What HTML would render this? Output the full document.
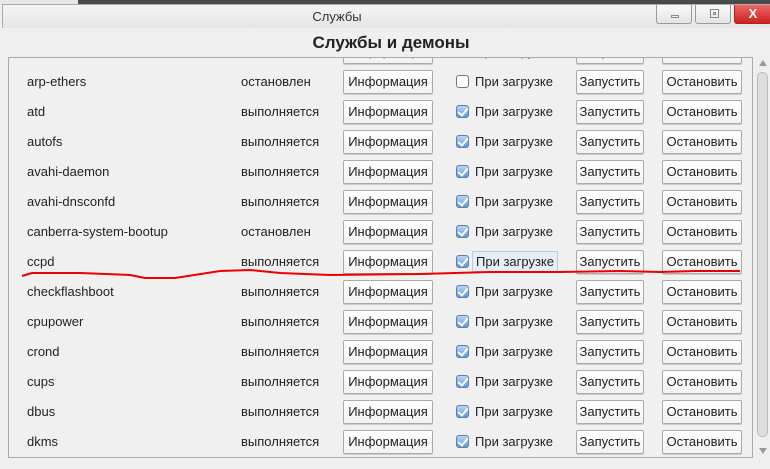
<!DOCTYPE html>
<html><head><meta charset="utf-8"><style>
*{margin:0;padding:0;box-sizing:border-box}
body{width:770px;height:469px;overflow:hidden;background:#efefef;font-family:"Liberation Sans","DejaVu Sans",sans-serif;font-size:13px;color:#222;position:relative}
.top{position:absolute;left:0;top:0;width:770px;height:5px;background:#e8e8e8}
.top .d{position:absolute;left:78px;top:0;right:0;height:4px;background:#4a4a4a}
.tb{position:absolute;left:2px;top:4px;width:768px;height:24px;background:linear-gradient(#f4f4f4,#e6e6e6);border-top:1px solid #aaa;border-left:1px solid #aaa}
.tb .t{position:absolute;left:0;width:668px;text-align:center;top:4px;font-size:13px;color:#333}
.wb{position:absolute;top:0;height:19px;border:1px solid #999;border-top:none;border-radius:0 0 3px 3px;background:linear-gradient(#fafafa,#e4e4e4)}
.h{position:absolute;top:33px;left:0;width:770px;text-align:center;font-weight:bold;font-size:17px;color:#222;padding-left:12px}
.frame{position:absolute;left:8px;top:57px;width:745px;height:401px;border:1px solid #aaa;overflow:hidden;background:#f0f0f0}
.row{position:absolute;left:0;width:745px;height:30px}
.row span{position:absolute;top:7px}
.n{left:18px}.s{left:232px}
.btn{position:absolute;top:3px;height:24px;border:1px solid #aaa;border-radius:2px;background:linear-gradient(#fff,#f2f2f2);text-align:center;line-height:22px;box-shadow:0 1px 0 #ccc}
.b1{left:334px;width:90px}.b2{left:567px;width:68px}.b3{left:653px;width:80px}
.cb{position:absolute;left:447px;top:8px;width:13px;height:13px;border:1px solid #777;border-radius:3px;background:#fff}
.cb.on{background:linear-gradient(#bcd6f2,#5f97d6);border-color:#5a7fb0}
.cb.on:after{content:"";position:absolute;left:3px;top:0px;width:4px;height:8px;border:solid #fff;border-width:0 2px 2px 0;transform:rotate(40deg)}
.lb{left:466px}
.sb{position:absolute;left:755px;top:57px;width:15px;height:401px}
</style></head><body>
<div class="top"><div class="d"></div></div>
<div class="tb"><div class="t">Службы</div>
<div class="wb" style="left:653px;width:36px"><div style="position:absolute;left:14px;top:10px;width:8px;height:3px;border:1px solid #888"></div></div>
<div class="wb" style="left:692px;width:36px"><div style="position:absolute;left:14px;top:4px;width:9px;height:9px;border:1px solid #888"><div style="position:absolute;left:2px;top:2px;width:3px;height:3px;border:1px solid #888"></div></div></div>
<div class="wb" style="left:731px;width:38px;background:linear-gradient(#e66,#c22);border-color:#a22;color:#fff;font-weight:bold;text-align:center;line-height:18px">X</div>
</div>
<div class="h">Службы и демоны</div>
<div class="frame">
<div class="row" style="top:-21px"><div class="btn b1">Информация</div><div class="cb on"></div><span class="lb">При загрузке</span><div class="btn b2">Запустить</div><div class="btn b3">Остановить</div></div>
<div class="row" style="top:9px"><span class="n">arp-ethers</span><span class="s">остановлен</span><div class="btn b1">Информация</div><div class="cb"></div><span class="lb">При загрузке</span><div class="btn b2">Запустить</div><div class="btn b3">Остановить</div></div>
<div class="row" style="top:39px"><span class="n">atd</span><span class="s">выполняется</span><div class="btn b1">Информация</div><div class="cb on"></div><span class="lb">При загрузке</span><div class="btn b2">Запустить</div><div class="btn b3">Остановить</div></div>
<div class="row" style="top:69px"><span class="n">autofs</span><span class="s">выполняется</span><div class="btn b1">Информация</div><div class="cb on"></div><span class="lb">При загрузке</span><div class="btn b2">Запустить</div><div class="btn b3">Остановить</div></div>
<div class="row" style="top:99px"><span class="n">avahi-daemon</span><span class="s">выполняется</span><div class="btn b1">Информация</div><div class="cb on"></div><span class="lb">При загрузке</span><div class="btn b2">Запустить</div><div class="btn b3">Остановить</div></div>
<div class="row" style="top:129px"><span class="n">avahi-dnsconfd</span><span class="s">выполняется</span><div class="btn b1">Информация</div><div class="cb on"></div><span class="lb">При загрузке</span><div class="btn b2">Запустить</div><div class="btn b3">Остановить</div></div>
<div class="row" style="top:159px"><span class="n">canberra-system-bootup</span><span class="s">остановлен</span><div class="btn b1">Информация</div><div class="cb on"></div><span class="lb">При загрузке</span><div class="btn b2">Запустить</div><div class="btn b3">Остановить</div></div>
<div class="row" style="top:189px"><span class="n">ccpd</span><span class="s">выполняется</span><div class="btn b1">Информация</div><div class="cb on"></div><span class="lb" style="top:4px;left:463px;padding:2px 3px;border:1px solid #b8cde0;background:#e6edf4">При загрузке</span><div class="btn b2">Запустить</div><div class="btn b3">Остановить</div></div>
<div class="row" style="top:219px"><span class="n">checkflashboot</span><span class="s">выполняется</span><div class="btn b1">Информация</div><div class="cb on"></div><span class="lb">При загрузке</span><div class="btn b2">Запустить</div><div class="btn b3">Остановить</div></div>
<div class="row" style="top:249px"><span class="n">cpupower</span><span class="s">выполняется</span><div class="btn b1">Информация</div><div class="cb on"></div><span class="lb">При загрузке</span><div class="btn b2">Запустить</div><div class="btn b3">Остановить</div></div>
<div class="row" style="top:279px"><span class="n">crond</span><span class="s">выполняется</span><div class="btn b1">Информация</div><div class="cb on"></div><span class="lb">При загрузке</span><div class="btn b2">Запустить</div><div class="btn b3">Остановить</div></div>
<div class="row" style="top:309px"><span class="n">cups</span><span class="s">выполняется</span><div class="btn b1">Информация</div><div class="cb on"></div><span class="lb">При загрузке</span><div class="btn b2">Запустить</div><div class="btn b3">Остановить</div></div>
<div class="row" style="top:339px"><span class="n">dbus</span><span class="s">выполняется</span><div class="btn b1">Информация</div><div class="cb on"></div><span class="lb">При загрузке</span><div class="btn b2">Запустить</div><div class="btn b3">Остановить</div></div>
<div class="row" style="top:369px"><span class="n">dkms</span><span class="s">выполняется</span><div class="btn b1">Информация</div><div class="cb on"></div><span class="lb">При загрузке</span><div class="btn b2">Запустить</div><div class="btn b3">Остановить</div></div>
</div>
<div class="sb">
<div style="position:absolute;left:4px;top:3px;width:0;height:0;border:4px solid transparent;border-bottom:6px solid #999;border-top:none"></div>
<div style="position:absolute;left:2px;top:15px;width:11px;height:365px;border:1px solid #bbb;border-radius:5px;background:#dedede"></div>
<div style="position:absolute;left:4px;top:391px;width:0;height:0;border:4px solid transparent;border-top:6px solid #999;border-bottom:none"></div>
</div>
<svg style="position:absolute;left:0;top:0" width="770" height="469"><polyline fill="none" stroke="#e00" stroke-width="2" points="22,276 32,273 80,273 130,275 145,278 175,278 220,271 250,270 280,273 330,275 420,274 490,272 560,272 620,271 660,272 695,271 740,271"/></svg>
</body></html>
